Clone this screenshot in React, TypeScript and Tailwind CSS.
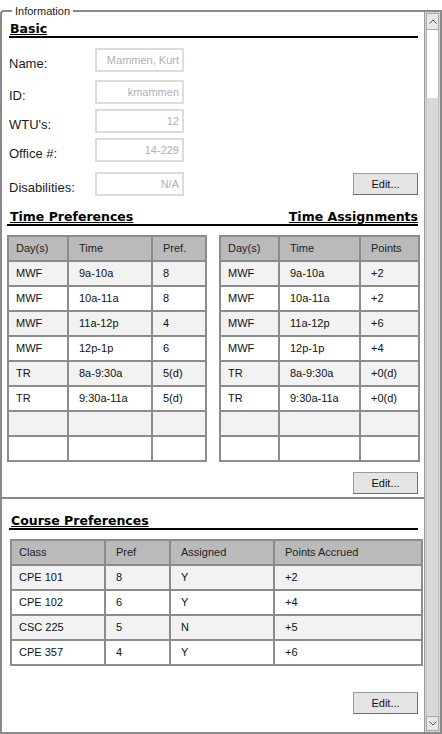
import React from "react";

const timePrefs = [
  ["MWF", "9a-10a", "8"],
  ["MWF", "10a-11a", "8"],
  ["MWF", "11a-12p", "4"],
  ["MWF", "12p-1p", "6"],
  ["TR", "8a-9:30a", "5(d)"],
  ["TR", "9:30a-11a", "5(d)"],
  ["", "", ""],
  ["", "", ""],
];

const timeAssign = [
  ["MWF", "9a-10a", "+2"],
  ["MWF", "10a-11a", "+2"],
  ["MWF", "11a-12p", "+6"],
  ["MWF", "12p-1p", "+4"],
  ["TR", "8a-9:30a", "+0(d)"],
  ["TR", "9:30a-11a", "+0(d)"],
  ["", "", ""],
  ["", "", ""],
];

const courses = [
  ["CPE 101", "8", "Y", "+2"],
  ["CPE 102", "6", "Y", "+4"],
  ["CSC 225", "5", "N", "+5"],
  ["CPE 357", "4", "Y", "+6"],
];

const basic = [
  { label: "Name:", value: "Mammen, Kurt", gap: "mt-0" },
  { label: "ID:", value: "kmammen", gap: "mt-[8px]" },
  { label: "WTU's:", value: "12", gap: "mt-[5px]" },
  { label: "Office #:", value: "14-229", gap: "mt-[5px]" },
  { label: "Disabilities:", value: "N/A", gap: "mt-[10px]" },
];

function Heading({ children }: { children: React.ReactNode }) {
  return (
    <span className="font-['DejaVu_Sans',sans-serif] text-[12.5px] font-bold leading-[14px] text-black underline underline-offset-[1px]">
      {children}
    </span>
  );
}

function EditButton() {
  return (
    <button className="flex h-[22px] w-[65px] items-center justify-center border border-[#9a9a9a] border-b-[#6f6f6f] border-r-[#6f6f6f] bg-[#e4e4e4] text-[11px] text-[#111]">
      Edit...
    </button>
  );
}

function Grid({ cols, head, rows }: { cols: string; head: string[]; rows: string[][] }) {
  return (
    <div className={`grid ${cols} auto-rows-[23px] gap-[2px] bg-[#8c8c8c] p-[2px] text-[11px] text-[#111]`}>
      {head.map((h, i) => (
        <div
          key={`h${i}`}
          className={`flex items-center bg-[#bababa] text-[#222] ${i === 0 ? "pl-[7px]" : "pl-[10px]"}`}
        >
          {h}
        </div>
      ))}
      {rows.map((r, ri) =>
        r.map((c, ci) => (
          <div
            key={`${ri}-${ci}`}
            className={`flex items-center ${ci === 0 ? "pl-[7px]" : "pl-[10px]"} ${
              ri % 2 === 0 ? "bg-[#f2f2f2]" : "bg-white"
            }`}
          >
            {c}
          </div>
        ))
      )}
    </div>
  );
}

function Scrollbar() {
  return (
    <div className="flex w-[16px] flex-col border-l border-[#9a9a9a] bg-[#d6d6d6]">
      <div className="mx-[1px] mt-[1px] flex h-[17px] items-center justify-center border border-[#a8a8a8] bg-[#e8e8e8]">
        <svg width="8" height="5" viewBox="0 0 8 5">
          <path d="M0.5 4.5 L4 1 L7.5 4.5" fill="none" stroke="#555" strokeWidth="1" />
        </svg>
      </div>
      <div className="mx-[1px] h-[68px] border-x border-[#b5b5b5] bg-white" />
      <div className="mx-[1px] flex-1 border-x border-[#c4c4c4] bg-[#d8d8d8]" />
      <div className="mx-[1px] mb-[1px] flex h-[15px] items-center justify-center border border-[#a8a8a8] bg-[#e8e8e8]">
        <svg width="8" height="5" viewBox="0 0 8 5">
          <path d="M0.5 0.5 L4 4 L7.5 0.5" fill="none" stroke="#555" strokeWidth="1" />
        </svg>
      </div>
    </div>
  );
}

export default function App() {
  return (
    <div className="h-[734px] w-[442px] overflow-hidden bg-white pt-[10px] font-['Liberation_Sans',Arial,sans-serif] text-[#1a1a1a]">
      <div className="relative flex h-[724px] w-[442px] rounded-tl-[4px] border-2 border-[#8a8a8a]">
        <span className="absolute left-[10px] top-[-7px] bg-white px-[3px] text-[11px] leading-[12px] text-[#222]">
          Information
        </span>

        <div className="flex flex-1 flex-col">
          {/* Basic */}
          <div className="ml-[7px] mr-[6px] mt-[10px] flex border-b-2 border-black pl-[1px]">
            <Heading>Basic</Heading>
          </div>
          <div className="ml-[7px] mr-[6px] mt-[10px] flex flex-col">
            {basic.map((b, i) => (
              <div key={b.label} className={`flex h-[24px] items-center ${b.gap}`}>
                <span className="w-[86px] pt-[6px] text-[13px] leading-[15px]">{b.label}</span>
                <div className="flex h-[24px] w-[89px] items-center justify-end border-2 border-[#dcdcdc] pr-[3px] text-[11px] text-[#b0b0b0]">
                  {b.value}
                </div>
                {i === basic.length - 1 && (
                  <div className="ml-auto">
                    <EditButton />
                  </div>
                )}
              </div>
            ))}
          </div>

          {/* Time */}
          <div className="ml-[5px] mr-[6px] mt-[14px] flex justify-between border-b-2 border-black pl-[3px]">
            <Heading>Time Preferences</Heading>
            <Heading>Time Assignments</Heading>
          </div>
          <div className="ml-[5px] mr-[4px] mt-[9px] flex justify-between">
            <div className="w-[200px]">
              <Grid cols="grid-cols-[58px_82px_52px]" head={["Day(s)", "Time", "Pref."]} rows={timePrefs} />
            </div>
            <div className="w-[201px]">
              <Grid cols="grid-cols-[57px_79px_57px]" head={["Day(s)", "Time", "Points"]} rows={timeAssign} />
            </div>
          </div>
          <div className="mr-[6px] mt-[10px] flex justify-end">
            <EditButton />
          </div>
          <div className="mt-[3px] h-[2px] bg-[#8a8a8a]" />

          {/* Courses */}
          <div className="ml-[7px] mr-[6px] mt-[15px] flex border-b-2 border-black pl-[2px]">
            <Heading>Course Preferences</Heading>
          </div>
          <div className="ml-[8px] mr-[1px] mt-[9px]">
            <Grid
              cols="grid-cols-[92px_63px_102px_146px]"
              head={["Class", "Pref", "Assigned", "Points Accrued"]}
              rows={courses}
            />
          </div>
          <div className="mr-[6px] mt-[26px] flex justify-end">
            <EditButton />
          </div>
        </div>

        <Scrollbar />
      </div>
    </div>
  );
}
